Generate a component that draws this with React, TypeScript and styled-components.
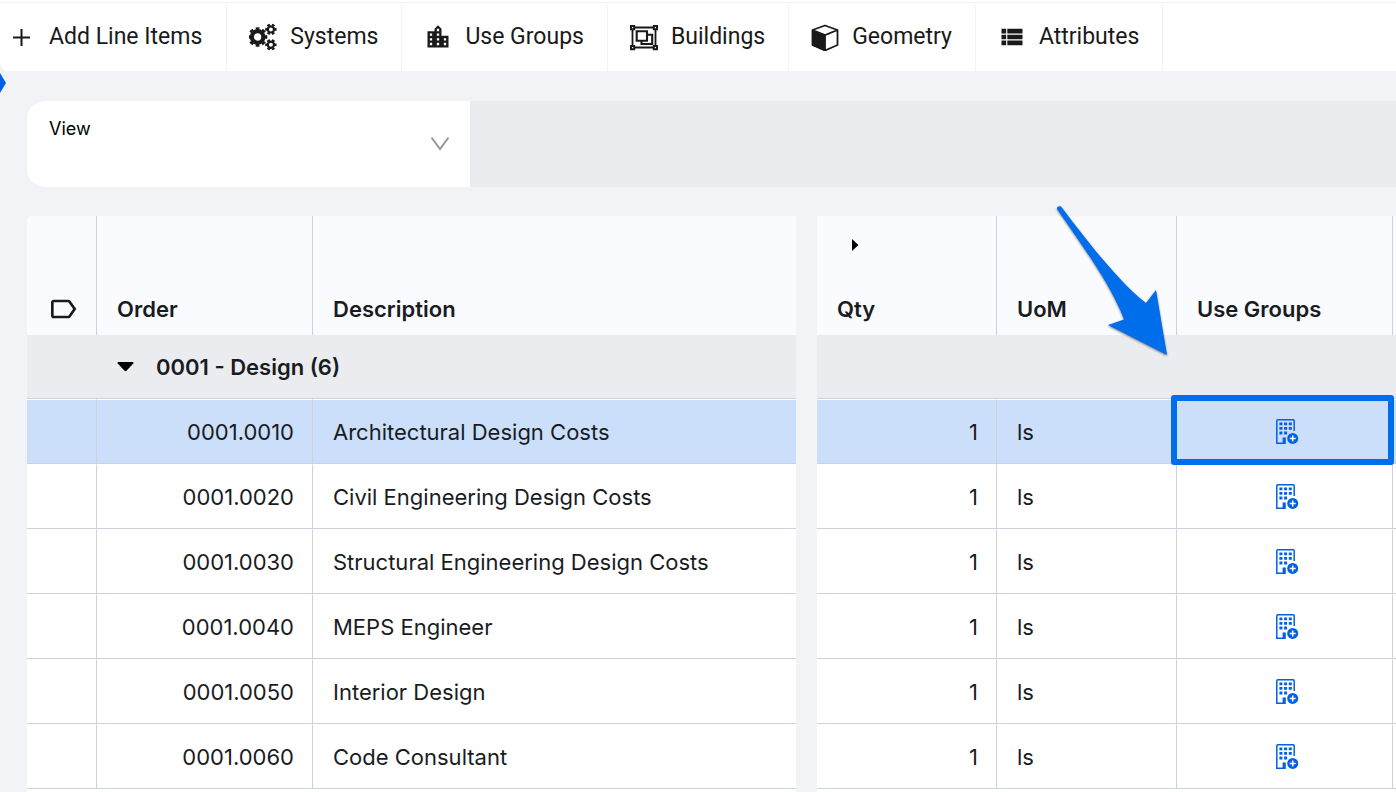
import React from "react";
import styled, { createGlobalStyle, css } from "styled-components";
import { MdLabelOutline, MdLocationCity, MdViewList } from "react-icons/md";

const blue = "#0060e8";
const callout = "#006eea";
const line = "#cdd1db";
const page = "#f1f3f7";
const band = "#ebecf0";

const GlobalStyle = createGlobalStyle`
  * { box-sizing: border-box; }
  body {
    margin: 0;
    background: ${page};
    color: #191c1f;
    font-family: Inter, "Liberation Sans", sans-serif;
    font-size: 22px;
    line-height: 28px;
  }
`;

const Page = styled.div`
  position: relative;
  display: flex;
  flex-direction: column;
  min-height: 100vh;
  overflow: hidden;
`;

const Toolbar = styled.nav`
  display: flex;
  height: 71px;
  padding-top: 2px;
  background: #fff;
`;

const ToolbarItems = styled.div`
  display: flex;
  flex: 1;
  border-top: 1px solid ${page};
`;

const ToolButton = styled.button<{ $first?: boolean }>`
  display: flex;
  align-items: center;
  gap: 13px;
  padding: 0 ${(p) => (p.$first ? "24px 0 8px" : "23px 0 22px")};
  border: 0;
  border-right: 1px solid ${page};
  background: transparent;
  color: #191919;
  font-family: Roboto, "Liberation Sans", sans-serif;
  font-size: 23px;
  line-height: 28px;
  white-space: nowrap;

  svg {
    flex: none;
    width: 28px;
    height: 28px;
  }
`;

const EdgeMarker = styled.svg`
  position: absolute;
  left: 0;
  top: 63px;
`;

const Content = styled.main`
  display: flex;
  flex-direction: column;
  flex: 1;
  gap: 29px;
  padding: 30px 0 0 27px;
`;

const ViewBar = styled.div`
  display: flex;
  height: 86px;
  border-radius: 18px 0 0 18px;
  background: ${band};
  overflow: hidden;
`;

const ViewPicker = styled.div`
  display: flex;
  align-items: center;
  width: 443px;
  padding: 14px 20px 14px 22px;
  background: #fff;
`;

const ViewField = styled.div`
  display: flex;
  flex: 1;
  flex-direction: column;
  align-self: stretch;
`;

const ViewLabel = styled.label`
  color: #000;
  font-size: 18px;
  line-height: 28px;
`;

const ViewSelect = styled.select`
  flex: 1;
  border: 0;
  background: transparent;
  appearance: none;
  font: inherit;
`;

const Grid = styled.div`
  display: flex;
  flex: 1;
  gap: 21px;
`;

const Panel = styled.section<{ $width?: number }>`
  position: relative;
  flex: ${(p) => (p.$width ? `0 0 ${p.$width}px` : "1 1 0")};
  min-width: 0;
  border-radius: ${(p) => (p.$width ? 0 : "6px 0 0 0")};
  background: #fff;
  overflow: ${(p) => (p.$width ? "visible" : "hidden")};
`;

const Table = styled.table`
  width: 100%;
  table-layout: fixed;
  border-collapse: separate;
  border-spacing: 0;
`;

const Head = styled.th`
  height: 119px;
  padding: 0 20px 12px;
  border-right: 1px solid ${line};
  background: #fafbff;
  font-weight: 600;
  text-align: left;
  vertical-align: bottom;

  &:last-child { border-right: 0; }
`;

const HeadIcon = styled.span`
  display: flex;

  svg {
    flex: none;
    width: 32px;
    height: 28px;
  }
`;

const HeadStack = styled.span`
  display: flex;
  flex-direction: column;
  align-items: flex-start;
  gap: 43px;
`;

const IconButton = styled.button`
  display: inline-flex;
  padding: 0;
  border: 0;
  background: transparent;
  color: inherit;
`;

const GroupCell = styled.td`
  height: 64px;
  padding: 0;
  border-bottom: 1px solid ${line};
  background: ${band};
  font-weight: 600;
`;

const GroupToggle = styled.button`
  display: flex;
  align-items: center;
  gap: 22px;
  padding: 0 20px;
  border: 0;
  background: transparent;
  color: inherit;
  font: inherit;
`;

const Row = styled.tr<{ $selected?: boolean }>`
  --row-bg: ${(p) => (p.$selected ? "#cbdffa" : "#fff")};
`;

const Cell = styled.td<{ $align?: "right" | "center" }>`
  position: relative;
  height: 65px;
  padding: 0 ${(p) => (p.$align === "right" ? 18 : 20)}px;
  border-top: 1px solid #fff;
  border-right: 1px solid ${line};
  border-bottom: 1px solid ${line};
  background: var(--row-bg);
  text-align: ${(p) => p.$align ?? "left"};
  white-space: nowrap;

  &:last-child { border-right: 0; }
  ${(p) => p.$align === "center" && css`padding: 0 0 0 6px;`}

  ${IconButton} {
    padding-bottom: 2px;
    color: ${blue};
    vertical-align: middle;
  }
`;

const Highlight = styled.span`
  position: absolute;
  inset: -5px -2px -2px -6px;
  z-index: 1;
  border: 6px solid ${callout};
  border-radius: 3px;
  pointer-events: none;
`;

const Arrow = styled.svg`
  position: absolute;
  left: 235px;
  top: -16px;
  z-index: 2;
  filter: drop-shadow(0 1px 1px rgba(0, 0, 0, 0.5));
  pointer-events: none;
`;

const PlusIcon = () => (
  <svg viewBox="0 0 28 28" fill="none" stroke="currentColor" strokeWidth="2" aria-hidden="true">
    <path d="M13.5 6v17M5 14.5h17" />
  </svg>
);

const GearsIcon = () => (
  <svg viewBox="1 0 28 28" fill="none" stroke="currentColor" aria-hidden="true">
    <circle cx="9.6" cy="14" r="5.8" strokeWidth="4.2" />
    <circle cx="9.6" cy="14" r="8.5" strokeWidth="2.4" pathLength="80" strokeDasharray="5.600 4.400" strokeDashoffset="2.800" />
    {[6.4, 21.8].map((cy) => (
      <React.Fragment key={cy}>
        <circle cx="22.9" cy={cy} r="3.1" strokeWidth="2.2" />
        <circle cx="22.9" cy={cy} r="4.8" strokeWidth="1.8" pathLength="60" strokeDasharray="5.600 4.400" strokeDashoffset="2.800" />
      </React.Fragment>
    ))}
  </svg>
);

const GroupFrameIcon = () => (
  <svg viewBox="0 0 28 28" fill="none" stroke="currentColor" strokeWidth="1.8" aria-hidden="true">
    <path d="M2.5 4.5H25.5V24.5H2.5Z" />
    <path d="M6.700 8.300H17V17.700H6.700Z" strokeWidth="2.1" />
    <path d="M17 11.800H22.200V21H11.500V17.700" strokeWidth="2.1" />
    <path
      d="M1 3H4.200V6.200H1ZM23.800 3H27V6.200H23.800ZM1 23H4.200V26.200H1ZM23.800 23H27V26.200H23.800Z"
      fill="#fff"
      strokeWidth="2"
    />
  </svg>
);

const CubeIcon = () => (
  <svg viewBox="0 0 28 28" aria-hidden="true">
    <path
      d="M14 2 26.500 6.500V21.500L14 27 1.500 21.500V6.500Z M1.500 6.500 14 11.600 26.500 6.500 M14 11.600V27"
      transform="translate(0 .5)"
      fill="none"
      stroke="currentColor"
      strokeWidth="1.8"
      strokeLinejoin="round"
    />
    <path d="M1 7 14 12.300V28L1 22.400Z" fill="currentColor" />
  </svg>
);

const BuildingAddIcon = () => (
  <svg width="23" height="26" viewBox="0 0 23 26" aria-hidden="true">
    <path
      d="M18.2 12V2Q18.2.8 17 .8H2Q.8.8.8 2V24.2H8.8V18.8"
      fill="none"
      stroke="currentColor"
      strokeWidth="1.5"
    />
    <path
      d="M3.4 3.4h3v2.8h-3zM8.1 3.4h3v2.8h-3zM12.8 3.4h3v2.8h-3zM3.4 8h3v2.8h-3zM8.1 8h3v2.8h-3zM12.8 8h3v2.8h-3zM3.4 12.6h3v2.8h-3zM8.1 12.6h3v2.8h-3zM6.6 18.6h2.9V25H6.6z"
      fill="currentColor"
    />
    <circle cx="16.7" cy="19.4" r="5.5" fill="currentColor" />
    <path d="M16.7 16.4v6M13.7 19.4h6" stroke="#fff" strokeWidth="1.5" />
  </svg>
);

const tools = [
  { label: "Add Line Items", icon: <PlusIcon /> },
  { label: "Systems", icon: <GearsIcon /> },
  { label: "Use Groups", icon: <MdLocationCity /> },
  { label: "Buildings", icon: <GroupFrameIcon /> },
  { label: "Geometry", icon: <CubeIcon /> },
  { label: "Attributes", icon: <MdViewList /> },
];

const items = [
  { order: "0001.0010", description: "Architectural Design Costs", qty: 1, uom: "ls", selected: true },
  { order: "0001.0020", description: "Civil Engineering Design Costs", qty: 1, uom: "ls" },
  { order: "0001.0030", description: "Structural Engineering Design Costs", qty: 1, uom: "ls" },
  { order: "0001.0040", description: "MEPS Engineer", qty: 1, uom: "ls" },
  { order: "0001.0050", description: "Interior Design", qty: 1, uom: "ls" },
  { order: "0001.0060", description: "Code Consultant", qty: 1, uom: "ls" },
];

export default function App() {
  return (
    <Page>
      <GlobalStyle />
      <Toolbar>
        <ToolbarItems>
          {tools.map((tool, i) => (
            <ToolButton key={tool.label} type="button" $first={i === 0}>
              {tool.icon}
              {tool.label}
            </ToolButton>
          ))}
        </ToolbarItems>
      </Toolbar>
      <EdgeMarker width="8" height="40" viewBox="0 0 8 40" aria-hidden="true">
        <path d="M0 1 5 8H0Z" fill={page} />
        <path d="M0 10 6 20 0 30Z" fill={blue} />
      </EdgeMarker>
      <Content>
        <ViewBar>
          <ViewPicker>
            <ViewField>
              <ViewLabel htmlFor="view">View</ViewLabel>
              <ViewSelect id="view" />
            </ViewField>
            <svg width="20" height="16" viewBox="0 0 20 16" fill="none" stroke="#999" strokeWidth="2" aria-hidden="true">
              <path d="M1.5 1.5 10 13 18.5 1.5" />
            </svg>
          </ViewPicker>
        </ViewBar>
        <Grid>
          <Panel>
            <Table>
              <colgroup>
                <col width="70" />
                <col width="216" />
                <col />
              </colgroup>
              <thead>
                <tr>
                  <Head aria-label="Label"><HeadIcon><MdLabelOutline preserveAspectRatio="xMidYMid slice" /></HeadIcon></Head>
                  <Head>Order</Head>
                  <Head>Description</Head>
                </tr>
              </thead>
              <tbody>
                <tr>
                  <GroupCell />
                  <GroupCell colSpan={2}>
                    <GroupToggle type="button" aria-expanded="true">
                      <svg width="17" height="10" viewBox="0 0 17 10" aria-hidden="true">
                        <path d="M1 0H16Q17 .5 16.300 1.500L9.500 8.800Q8.500 9.700 7.500 8.800L.7 1.500Q0 .5 1 0Z" fill="#000" />
                      </svg>
                      0001 - Design (6)
                    </GroupToggle>
                  </GroupCell>
                </tr>
                {items.map((item) => (
                  <Row key={item.order} $selected={item.selected}>
                    <Cell />
                    <Cell $align="right">{item.order}</Cell>
                    <Cell>{item.description}</Cell>
                  </Row>
                ))}
              </tbody>
            </Table>
          </Panel>
          <Panel $width={579}>
            <Table>
              <colgroup>
                <col width="180" />
                <col width="180" />
                <col width="216" />
                <col />
              </colgroup>
              <thead>
                <tr>
                  <Head>
                    <HeadStack>
                      <IconButton type="button" aria-label="Expand quantity">
                        <svg width="36" height="14" viewBox="0 0 36 14" aria-hidden="true">
                          <path d="M15 1 21.500 7 15 13Z" fill="#000" />
                        </svg>
                      </IconButton>
                      Qty
                    </HeadStack>
                  </Head>
                  <Head>UoM</Head>
                  <Head>Use Groups</Head>
                  <Head as="td" />
                </tr>
              </thead>
              <tbody>
                <tr>
                  <GroupCell colSpan={4} />
                </tr>
                {items.map((item) => (
                  <Row key={item.order} $selected={item.selected}>
                    <Cell $align="right">{item.qty}</Cell>
                    <Cell>{item.uom}</Cell>
                    <Cell $align="center">
                      <IconButton type="button" aria-label={`Add use group to ${item.description}`}>
                        <BuildingAddIcon />
                      </IconButton>
                      {item.selected && <Highlight />}
                    </Cell>
                    <Cell />
                  </Row>
                ))}
              </tbody>
            </Table>
            <Arrow width="120" height="160" viewBox="1052 200 120 160" aria-hidden="true">
              <path
                d="M1057 209Q1057 205.500 1061 206.500C1079 230 1117 281 1146 303L1156 290 1167 355 1108 325 1124 319.500C1112 286 1081 244 1057 209Z"
                fill={callout}
              />
            </Arrow>
          </Panel>
        </Grid>
      </Content>
    </Page>
  );
}
